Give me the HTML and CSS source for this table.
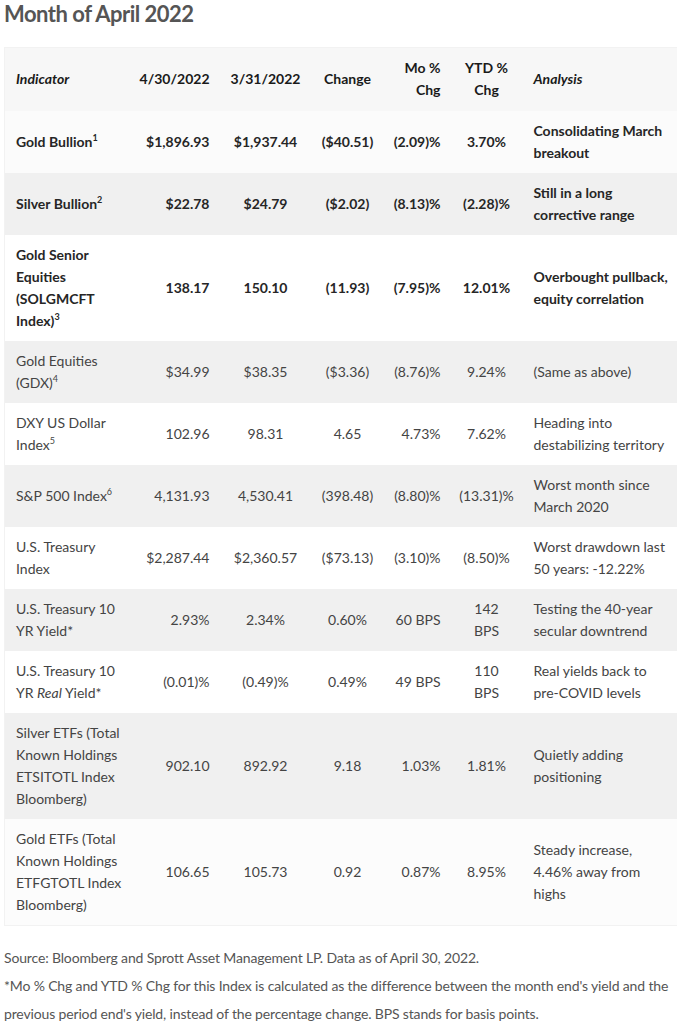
FILE: index.html
```html
<!DOCTYPE html>
<html lang="en">
<head>
<meta charset="utf-8">
<title>Month of April 2022</title>
<link rel="stylesheet" href="styles.css">
</head>
<body>
<main class="page">
  <h2 class="title">Month of April 2022</h2>
  <table class="data">
    <colgroup>
      <col class="c1"><col class="c2"><col class="c3"><col class="c4"><col class="c5"><col class="c6"><col class="c7">
    </colgroup>
    <thead>
      <tr class="head">
        <th class="l"><em>Indicator</em></th>
        <th class="r">4/30/2022</th>
        <th class="c">3/31/2022</th>
        <th class="c">Change</th>
        <th class="r"><span class="stack">Mo&nbsp;% Chg</span></th>
        <th class="c"><span class="stack">YTD&nbsp;% Chg</span></th>
        <th class="l"><em>Analysis</em></th>
      </tr>
    </thead>
    <tbody>
      <tr class="bold">
        <td class="l">Gold Bullion<sup>1</sup></td>
        <td class="r">$1,896.93</td>
        <td class="c">$1,937.44</td>
        <td class="c">($40.51)</td>
        <td class="r">(2.09)%</td>
        <td class="c">3.70%</td>
        <td class="l">Consolidating March breakout</td>
      </tr>
      <tr class="bold">
        <td class="l">Silver Bullion<sup>2</sup></td>
        <td class="r">$22.78</td>
        <td class="c">$24.79</td>
        <td class="c">($2.02)</td>
        <td class="r">(8.13)%</td>
        <td class="c">(2.28)%</td>
        <td class="l">Still in a long corrective range</td>
      </tr>
      <tr class="bold">
        <td class="l">Gold Senior Equities (SOLGMCFT Index)<sup>3</sup></td>
        <td class="r">138.17</td>
        <td class="c">150.10</td>
        <td class="c">(11.93)</td>
        <td class="r">(7.95)%</td>
        <td class="c">12.01%</td>
        <td class="l">Overbought pullback, equity correlation</td>
      </tr>
      <tr>
        <td class="l">Gold Equities (GDX)<sup>4</sup></td>
        <td class="r">$34.99</td>
        <td class="c">$38.35</td>
        <td class="c">($3.36)</td>
        <td class="r">(8.76)%</td>
        <td class="c">9.24%</td>
        <td class="l">(Same as above)</td>
      </tr>
      <tr>
        <td class="l">DXY US Dollar Index<sup>5</sup></td>
        <td class="r">102.96</td>
        <td class="c">98.31</td>
        <td class="c">4.65</td>
        <td class="r">4.73%</td>
        <td class="c">7.62%</td>
        <td class="l">Heading into destabilizing territory</td>
      </tr>
      <tr>
        <td class="l">S&amp;P 500 Index<sup>6</sup></td>
        <td class="r">4,131.93</td>
        <td class="c">4,530.41</td>
        <td class="c">(398.48)</td>
        <td class="r">(8.80)%</td>
        <td class="c">(13.31)%</td>
        <td class="l">Worst month since March 2020</td>
      </tr>
      <tr>
        <td class="l">U.S. Treasury Index</td>
        <td class="r">$2,287.44</td>
        <td class="c">$2,360.57</td>
        <td class="c">($73.13)</td>
        <td class="r">(3.10)%</td>
        <td class="c">(8.50)%</td>
        <td class="l">Worst drawdown last 50 years: -12.22%</td>
      </tr>
      <tr>
        <td class="l">U.S. Treasury 10 YR Yield*</td>
        <td class="r">2.93%</td>
        <td class="c">2.34%</td>
        <td class="c">0.60%</td>
        <td class="r">60 BPS</td>
        <td class="c"><span class="stack">142 BPS</span></td>
        <td class="l">Testing the 40-year secular downtrend</td>
      </tr>
      <tr>
        <td class="l">U.S. Treasury 10 YR <em>Real</em> Yield*</td>
        <td class="r">(0.01)%</td>
        <td class="c">(0.49)%</td>
        <td class="c">0.49%</td>
        <td class="r">49 BPS</td>
        <td class="c"><span class="stack">110 BPS</span></td>
        <td class="l">Real yields back to pre-COVID levels</td>
      </tr>
      <tr>
        <td class="l">Silver ETFs (Total Known Holdings ETSITOTL Index Bloomberg)</td>
        <td class="r">902.10</td>
        <td class="c">892.92</td>
        <td class="c">9.18</td>
        <td class="r">1.03%</td>
        <td class="c">1.81%</td>
        <td class="l">Quietly adding positioning</td>
      </tr>
      <tr>
        <td class="l">Gold ETFs (Total Known Holdings ETFGTOTL Index Bloomberg)</td>
        <td class="r">106.65</td>
        <td class="c">105.73</td>
        <td class="c">0.92</td>
        <td class="r">0.87%</td>
        <td class="c">8.95%</td>
        <td class="l">Steady increase, 4.46% away from highs</td>
      </tr>
    </tbody>
  </table>
  <div class="notes">
    <p>Source: Bloomberg and Sprott Asset Management LP. Data as of April 30, 2022.</p>
    <p>*Mo % Chg and YTD % Chg for this Index is calculated as the difference between the month end's yield and the previous period end's yield, instead of the percentage change. BPS stands for basis points.</p>
  </div>
</main>
</body>
</html>
```
FILE: styles.css
```css
html, body {
  margin: 0;
  padding: 0;
  background: #ffffff;
}
body {
  font-family: Lato, "Open Sans", Arial, sans-serif;
  color: #444444;
  font-size: 14px;
}
.page {
  padding: 0 0 0 4px;
  width: 673px;
}
.title {
  margin: 0 0 17px;
  font-size: 22px;
  line-height: 28px;
  height: 30px;
  font-weight: 700;
  letter-spacing: -0.5px;
  color: #555555;
}
.data {
  width: 673px;
  border-collapse: collapse;
  table-layout: fixed;
  border: 1px solid #f2f2f2;
}
.c1 { width: 126px; }
.c2 { width: 89px; }
.c3 { width: 92px; }
.c4 { width: 72px; }
.c5 { width: 67px; }
.c6 { width: 72px; }
.c7 { width: 155px; }
.data th, .data td {
  padding: 9px 4px;
  line-height: 22px;
  vertical-align: middle;
  font-size: 14px;
}
.data th {
  color: #1a1a1a;
  font-weight: 700;
  padding-bottom: 10px;
}
.data th em { font-style: italic; }
.data th.l:first-child, .data td.l:first-child {
  padding-left: 11px;
  padding-right: 5px;
}
.data th.r, .data td.r { padding-right: 10px; }
.data th.l:last-child, .data td.l:last-child {
  padding-left: 11px;
  padding-right: 3px;
}
.head { background: #f7f7f7; }
.data tbody tr:nth-child(odd) { background: #ffffff; }
.data tbody tr:nth-child(even) { background: #f0f0f0; }
.data tbody tr:first-child { background: #fbfbfb; }
.data tbody tr:last-child { background: #fcfcfc; }
.bold td { font-weight: 700; color: #262626; }
.l { text-align: left; }
.r { text-align: right; }
.c { text-align: center; }
.stack {
  display: inline-block;
  width: min-content;
}
sup {
  font-size: 9px;
  line-height: 0;
  vertical-align: 6px;
}
.notes {
  margin-top: 18px;
  color: #555555;
  font-size: 14px;
  line-height: 28px;
  letter-spacing: -0.15px;
}
.notes p { margin: 0; }
```
